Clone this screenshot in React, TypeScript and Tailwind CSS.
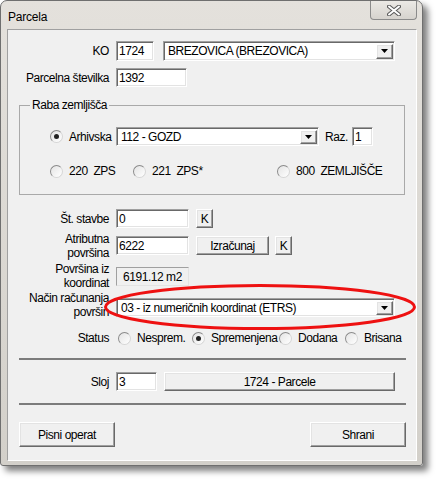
import React from "react";

const sunken =
  "bg-white border border-t-[#a0a0a0] border-l-[#a0a0a0] border-b-white border-r-white shadow-[inset_1px_1px_0_#696969,inset_-1px_-1px_0_#e3e3e3]";
const raised =
  "bg-[#f0f0f0] border border-t-white border-l-white border-b-[#696969] border-r-[#696969] shadow-[inset_-1px_-1px_0_#a0a0a0,inset_1px_1px_0_#e3e3e3]";

const Field = ({ value, w, h = "h-[19px]" }: { value: string; w: string; h?: string }) => (
  <div className={`${sunken} ${w} ${h} flex items-center pl-[2px] shrink-0 whitespace-nowrap`}>{value}</div>
);

const Btn = ({ label, w, h = "h-[19px]" }: { label: string; w: string; h?: string }) => (
  <div className={`${raised} ${w} ${h} flex items-center justify-center shrink-0 whitespace-nowrap`}>{label}</div>
);

const Combo = ({ value, w, h = "h-[20px]" }: { value: string; w: string; h?: string }) => (
  <div className={`${sunken} ${w} ${h} flex items-center shrink-0`}>
    <span className="flex-1 pl-[4px] whitespace-nowrap">{value}</span>
    <div className={`${raised} w-[17px] h-[calc(100%-3px)] mr-[1px] flex items-center justify-center`}>
      <svg width="7" height="4" viewBox="0 0 7 4">
        <polygon points="0,0 7,0 3.5,4" fill="#000" />
      </svg>
    </div>
  </div>
);

const Radio = ({ label, checked, w }: { label: string; checked?: boolean; w?: string }) => (
  <div className={`flex items-center gap-[6px] shrink-0 whitespace-pre ${w ?? ""}`}>
    <div className="w-[13px] h-[13px] rounded-full bg-gradient-to-br from-[#e4e4e4] to-white border border-t-[#8a8a8a] border-l-[#8a8a8a] border-b-[#d6d6d6] border-r-[#d6d6d6] flex items-center justify-center">
      {checked && <div className="w-[5px] h-[5px] rounded-full bg-[#222]" />}
    </div>
    <span>{label}</span>
  </div>
);

const Label = ({ children }: { children: React.ReactNode }) => (
  <div className="w-[90px] text-right leading-[14px] shrink-0 whitespace-nowrap">{children}</div>
);

export default function App() {
  return (
    <div className="w-[436px] h-[479px] bg-white font-['Liberation_Sans',sans-serif] text-[12px] tracking-[-0.45px] text-black">
      <div className="w-[423px] h-[466px] rounded-t-[7px] rounded-b-[3px] border border-[#6f6f6f] bg-gradient-to-b from-[#e4e1dc] to-[#d3d0ca] pl-[6px] pr-[5px] shadow-[5px_5px_6px_rgba(0,0,0,0.5)]">
        <div className="h-[28px] flex items-start">
          <span className="mt-[7px] ml-[1px] text-[12px] tracking-[-0.2px]">Parcela</span>
          <div className="ml-auto w-[47px] h-[19px] rounded-b-[4px] border border-t-0 border-[#8b8b8b] bg-gradient-to-b from-[#ebe9e5] to-[#d6d3ce] flex items-center justify-center">
            <svg width="14" height="11" viewBox="0 0 14 11">
              <path d="M2 1.5 L12 9.5 M12 1.5 L2 9.5" stroke="#5a5a5a" strokeWidth="4" strokeLinecap="round" />
              <path d="M2 1.5 L12 9.5 M12 1.5 L2 9.5" stroke="#fff" strokeWidth="2" strokeLinecap="round" />
            </svg>
          </div>
        </div>

        <div className="relative w-[410px] h-[432px] bg-[#f0f0f0] border border-t-[#a0a0a0] border-l-[#a0a0a0] border-b-white border-r-white pt-[11px] pl-[11px] pr-[10px] flex flex-col">
          <div className="flex items-center h-[20px] gap-[7px]">
            <Label>KO</Label>
            <Field value="1724" w="w-[38px]" h="h-[20px]" />
            <div className="ml-[2px]">
              <Combo value="BREZOVICA (BREZOVICA)" w="w-[232px]" />
            </div>
          </div>

          <div className="flex items-center h-[19px] gap-[7px] mt-[7px]">
            <Label>Parcelna številka</Label>
            <Field value="1392" w="w-[71px]" />
          </div>

          <div className="relative mt-[18px] h-[90px] mr-[1px] border border-[#a9a9a9]">
            <span className="absolute left-[10px] top-[-8px] px-[2px] bg-[#f0f0f0] leading-[14px]">Raba zemljišča</span>
            <div className="flex items-center h-[19px] mt-[21px] pl-[30px]">
              <Radio label="Arhivska" checked w="w-[66px]" />
              <Combo value="112 - GOZD" w="w-[203px]" h="h-[19px]" />
              <span className="ml-[6px] w-[27px]">Raz.</span>
              <Field value="1" w="w-[21px]" />
            </div>
            <div className="flex items-center h-[14px] mt-[18px] pl-[30px]">
              <Radio label="220  ZPS" w="w-[83px]" />
              <Radio label="221  ZPS*" w="w-[144px]" />
              <Radio label="800  ZEMLJIŠČE" />
            </div>
          </div>

          <div className="flex items-center h-[19px] gap-[7px] mt-[14px]">
            <Label>Št. stavbe</Label>
            <Field value="0" w="w-[73px]" />
            <Btn label="K" w="w-[17px]" />
          </div>

          <div className="flex items-start h-[26px] gap-[7px] mt-[4px]">
            <Label>
              Atributna
              <br />
              površina
            </Label>
            <div className="flex gap-[7px] mt-[4px]">
              <Field value="6222" w="w-[73px]" />
              <Btn label="Izračunaj" w="w-[73px]" />
              <div className="-ml-[1px]">
                <Btn label="K" w="w-[17px]" />
              </div>
            </div>
          </div>

          <div className="flex items-start h-[26px] gap-[7px] mt-[4px]">
            <Label>
              Površina iz
              <br />
              koordinat
            </Label>
            <div className="mt-[5px] w-[73px] h-[19px] flex items-center pl-[6px] whitespace-nowrap border border-t-[#a0a0a0] border-l-[#a0a0a0] border-b-[#e3e3e3] border-r-[#e3e3e3]">
              6191.12 m2
            </div>
          </div>

          <div className="flex items-start h-[26px] gap-[7px] mt-[3px]">
            <Label>
              Način računanja
              <br />
              površin
            </Label>
            <div className="mt-[7px]">
              <Combo value="03 - iz numeričnih koordinat (ETRS)" w="w-[279px]" h="h-[19px]" />
            </div>
          </div>

          <div className="flex items-center h-[14px] gap-[7px] mt-[14px]">
            <Label>Status</Label>
            <div className="flex items-center ml-[2px]">
              <Radio label="Nesprem." w="w-[74px]" />
              <Radio label="Spremenjena" checked w="w-[87px]" />
              <Radio label="Dodana" w="w-[66px]" />
              <Radio label="Brisana" />
            </div>
          </div>

          <div className="h-[2px] bg-[#7c7c7c] mt-[13px]" />

          <div className="flex items-center h-[19px] gap-[7px] mt-[12px]">
            <Label>Sloj</Label>
            <Field value="3" w="w-[41px]" />
            <Btn label="1724 - Parcele" w="w-[231px]" />
          </div>

          <div className="h-[2px] bg-[#7c7c7c] mt-[12px]" />

          <div className="flex justify-between mt-[17px]">
            <Btn label="Pisni operat" w="w-[96px]" h="h-[25px]" />
            <Btn label="Shrani" w="w-[96px]" h="h-[25px]" />
          </div>

          <svg className="absolute left-[95px] top-[254px]" width="314" height="46" viewBox="0 0 314 46">
            <ellipse cx="157" cy="23" rx="154.5" ry="21.5" fill="none" stroke="#ee1111" strokeWidth="3" />
          </svg>
        </div>
      </div>
    </div>
  );
}
